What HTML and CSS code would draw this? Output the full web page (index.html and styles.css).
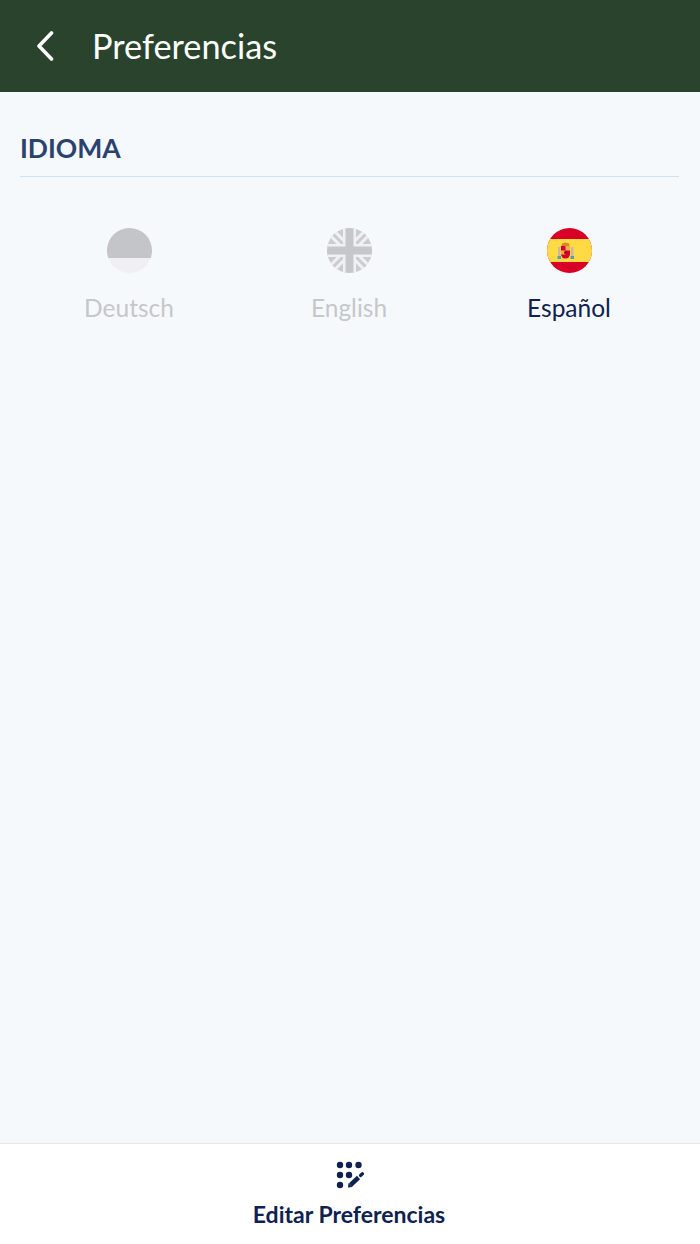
FILE: index.html
```html
<!DOCTYPE html>
<html lang="es">
<head>
<meta charset="utf-8">
<title>Preferencias</title>
<link rel="stylesheet" href="styles.css">
</head>
<body>
<div class="app">
  <header class="topbar">
    <svg class="back" width="18" height="30" viewBox="0 0 18 30"><path d="M15.500 2 L3 15 L15.500 28" fill="none" stroke="#fff" stroke-width="3.600" stroke-linecap="round" stroke-linejoin="round"/></svg>
    <h1 class="title">Preferencias</h1>
  </header>
  <main class="content">
    <h2 class="section">IDIOMA</h2>
    <div class="langs">
      <div class="lang off">
        <svg class="flag" viewBox="0 0 45 45"><defs><clipPath id="c1"><circle cx="22.500" cy="22.500" r="22.500"/></clipPath></defs><g clip-path="url(#c1)"><rect width="45" height="45" fill="#f0f0f3"/><rect width="45" height="30" fill="#c4c5c8"/></g></svg>
        <span class="name">Deutsch</span>
      </div>
      <div class="lang off">
        <svg class="flag" viewBox="0 0 45 45"><defs><clipPath id="c2"><circle cx="22.500" cy="22.500" r="22.500"/></clipPath></defs><g clip-path="url(#c2)"><rect width="45" height="45" fill="#cbccce"/><path d="M0 0L45 45M45 0L0 45" stroke="#f1f1f4" stroke-width="9"/><path d="M0 0L45 45M45 0L0 45" stroke="#cbccce" stroke-width="3"/><path d="M22.500 0V45M0 22.500H45" stroke="#f1f1f4" stroke-width="13"/><path d="M22.500 0V45M0 22.500H45" stroke="#c6c7ca" stroke-width="8"/></g></svg>
        <span class="name">English</span>
      </div>
      <div class="lang">
        <svg class="flag" viewBox="0 0 45 45"><defs><clipPath id="c3"><circle cx="22.500" cy="22.500" r="22.500"/></clipPath></defs><g clip-path="url(#c3)"><rect width="45" height="45" fill="#d80027"/><rect y="11" width="45" height="23" fill="#ffda44"/><rect x="11" y="19" width="2.500" height="10" fill="#c9b9a0"/><rect x="24" y="19" width="2.500" height="10" fill="#c9b9a0"/><path d="M14.500 18 L15 15.500 L18.500 14.500 L22 15.500 L22.500 18 Z" fill="#d8862a"/><path d="M14 18h9v8a4.500 4.500 0 0 1-9 0z" fill="#d80027"/><rect x="18.500" y="18" width="4.500" height="4.500" fill="#f0b04a"/><rect x="14" y="22.500" width="4.500" height="4" fill="#f0b04a"/><circle cx="18.500" cy="24.500" r="1.500" fill="#a2001d"/><rect x="10.500" y="28" width="3.500" height="3" fill="#5c9aa8"/><rect x="23.500" y="28" width="3.500" height="3" fill="#5c9aa8"/></g></svg>
        <span class="name">Español</span>
      </div>
    </div>
  </main>
  <footer class="bottom">
    <svg class="edit" width="30" height="28" viewBox="0 0 30 28">
      <g fill="#0f2150"><circle cx="5" cy="4" r="3.200"/><circle cx="14" cy="4" r="3.200"/><circle cx="23.500" cy="4" r="3.200"/><circle cx="5" cy="14" r="3.200"/><circle cx="14" cy="14" r="3.200"/><circle cx="5" cy="24" r="3.200"/></g>
      <path d="M15.500 24 L23.500 16.500" fill="none" stroke="#0f2150" stroke-width="4.500" stroke-linecap="butt"/><path d="M13 26.500 L13.500 22 L17.500 26 Z" fill="#0f2150"/><path d="M25.500 14.500 L27.500 12.700" fill="none" stroke="#0f2150" stroke-width="3.200" stroke-linecap="round"/>
    </svg>
    <span class="action">Editar Preferencias</span>
  </footer>
</div>
</body>
</html>
```
FILE: styles.css
```css
* { box-sizing: border-box; }
html, body { margin: 0; padding: 0; }
body { font-family: Lato, "Open Sans", sans-serif; background: #f5f9fc; }
.app { width: 700px; height: 1244px; display: flex; flex-direction: column; }
.topbar { height: 92px; flex: none; background: #29432d; display: flex; align-items: center; padding-left: 36px; }
.back { display: block; margin-right: 38px; }
.title { margin: 0; color: #fff; font-size: 34.300px; font-weight: 400; line-height: 40px; }
.content { flex: 1; padding: 36px 21px 0 20px; }
.section { margin: 0; color: #2b4270; font-size: 26.500px; font-weight: 700; line-height: 40px; padding-bottom: 8px; border-bottom: 1px solid #cfe2f3; }
.langs { display: grid; grid-template-columns: repeat(3, 1fr); margin-top: 51px; margin-left: -1px; }
.lang { display: flex; flex-direction: column; align-items: center; gap: 20px; }
.flag { width: 45px; height: 45px; display: block; }
.name { font-size: 24.500px; line-height: 30px; color: #0f2150; }
.off .name { color: #c6c7ca; }
.bottom { height: 101px; flex: none; background: #fff; border-top: 1px solid #e3e9f0; display: flex; flex-direction: column; align-items: center; padding-top: 17px; }
.edit { display: block; }
.action { margin-top: 11px; margin-right: 2px; font-size: 23px; font-weight: 700; line-height: 28px; color: #0f2150; }
```
